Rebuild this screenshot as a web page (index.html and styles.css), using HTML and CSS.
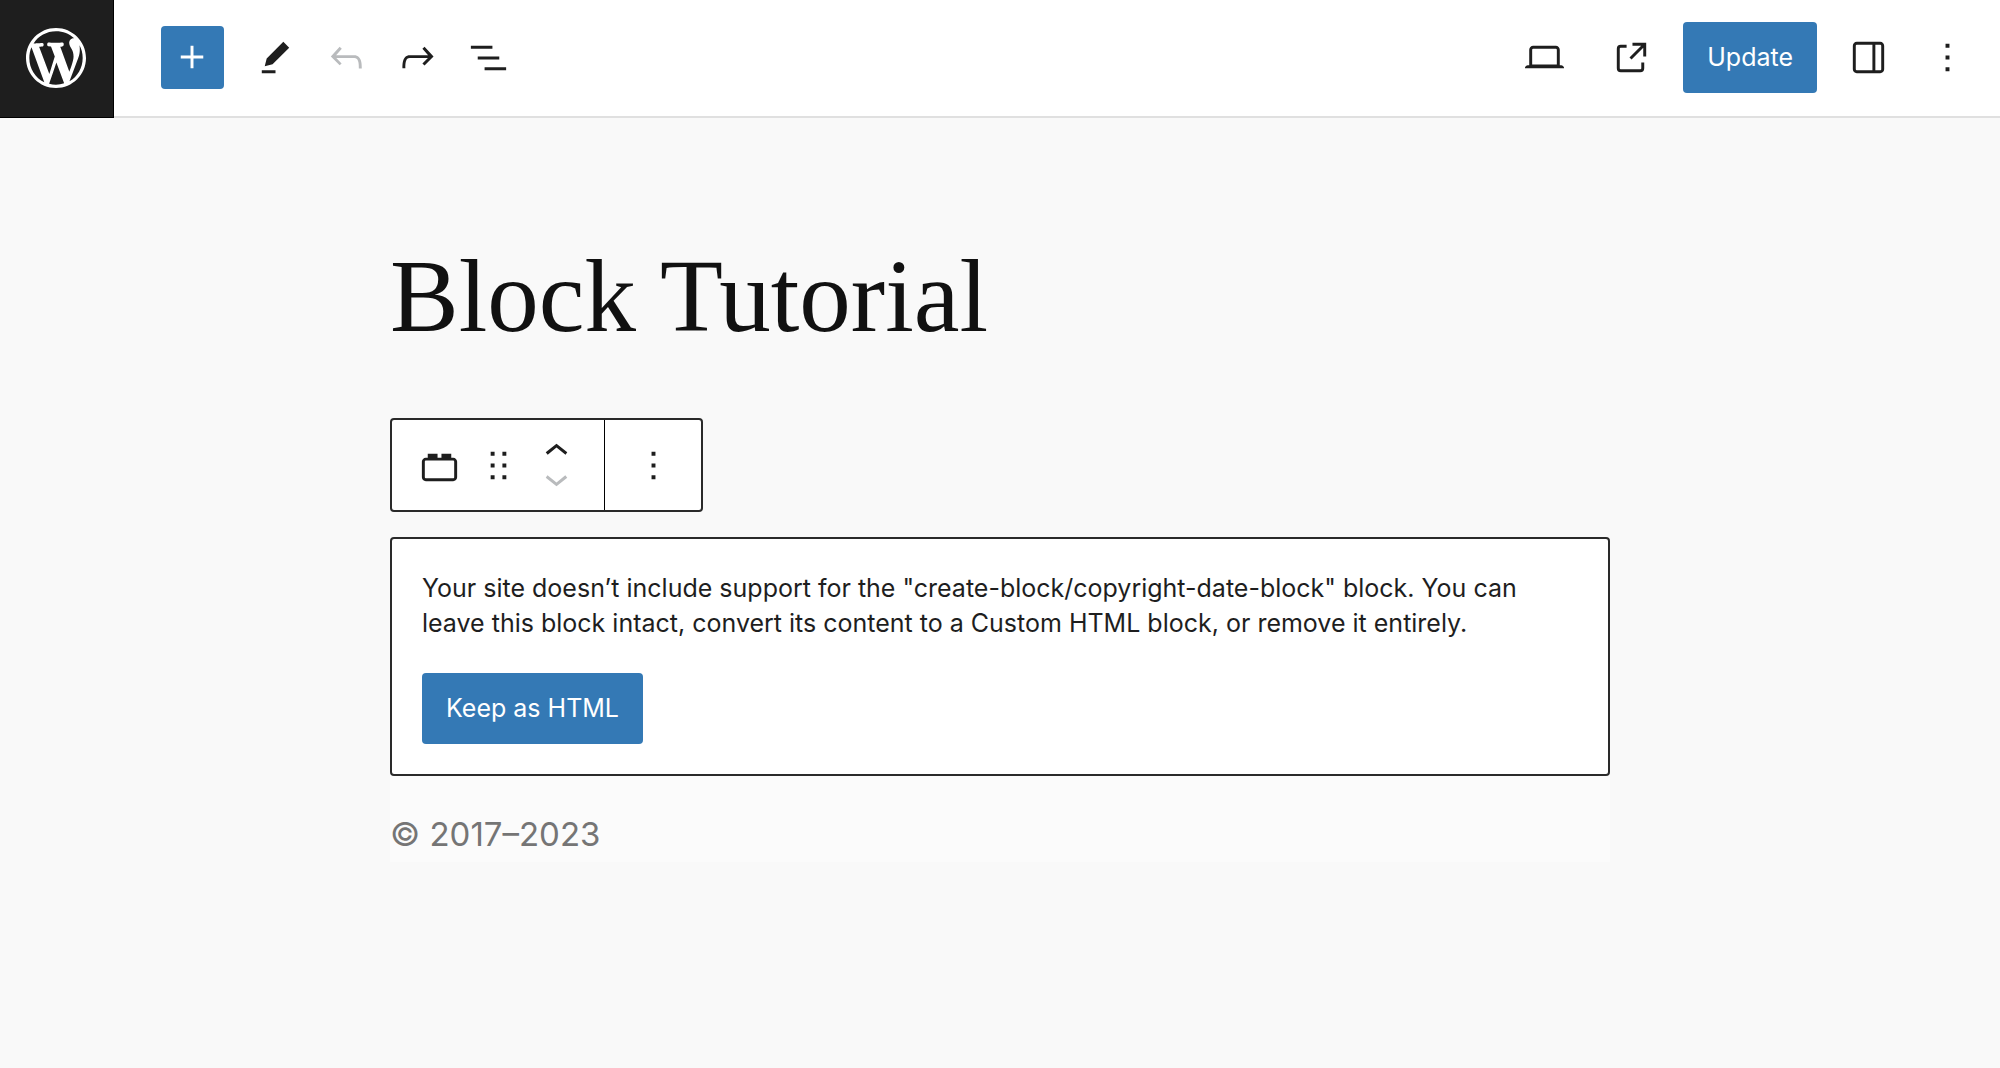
FILE: index.html
```html
<!DOCTYPE html>
<html lang="en">
<head>
<meta charset="utf-8">
<meta name="viewport" content="width=device-width, initial-scale=1">
<title>Block Tutorial</title>
<link rel="stylesheet" href="styles.css">
</head>
<body>
<header class="header">
  <a class="site-link" href="#" aria-label="View posts">
    <svg class="logo" viewBox="-2 -2 24 24" aria-hidden="true"><path d="M20 10c0-5.51-4.49-10-10-10C4.48 0 0 4.49 0 10c0 5.52 4.48 10 10 10 5.51 0 10-4.48 10-10zM7.78 15.37L4.37 6.22c.55-.02 1.17-.08 1.17-.08.5-.06.44-1.13-.06-1.11 0 0-1.45.11-2.37.11-.18 0-.37 0-.58-.01C4.12 2.69 6.87 1.11 10 1.11c2.33 0 4.45.87 6.05 2.34-.68-.11-1.65.39-1.65 1.58 0 .74.45 1.36.9 2.1.35.61.55 1.36.55 2.46 0 1.49-1.4 5-1.4 5l-3.03-8.37c.54-.02.82-.17.82-.17.5-.05.44-1.25-.06-1.22 0 0-1.44.12-2.38.12-.87 0-2.33-.12-2.33-.12-.5-.03-.56 1.2-.06 1.22l.92.08 1.26 3.41zM17.41 10c.24-.64.74-1.87.43-4.25.7 1.29 1.05 2.71 1.05 4.25 0 3.29-1.73 6.24-4.4 7.78.97-2.59 1.94-5.2 2.92-7.78zM6.1 18.09C3.12 16.65 1.11 13.53 1.11 10c0-1.3.23-2.48.72-3.59C3.25 10.3 4.67 14.2 6.1 18.09zm4.03-6.63l2.58 6.98c-.86.29-1.76.45-2.71.45-.79 0-1.57-.11-2.29-.33.81-2.38 1.62-4.74 2.42-7.1z"/></svg>
  </a>
  <div class="document-tools" role="toolbar" aria-label="Document tools">
    <button class="inserter" type="button" aria-label="Add block">
      <svg class="icon" viewBox="0 0 24 24" aria-hidden="true"><path d="M11 12.5V17.5H12.5V12.5H17.5V11H12.5V6H11V11H6V12.5H11Z"/></svg>
    </button>
    <div class="tool-group">
      <button class="tool" type="button" aria-label="Tools">
        <svg class="icon" viewBox="0 0 24 24" aria-hidden="true"><path d="m19 7-3-3-8.5 8.5-1 4 4-1L19 7Zm-7 11.5H5V20h7v-1.5Z"/></svg>
      </button>
      <button class="tool" type="button" aria-label="Undo" disabled>
        <svg class="icon" viewBox="0 0 24 24" aria-hidden="true"><path d="M18.3 11.7c-.6-.6-1.4-.9-2.3-.9H6.7l2.9-3.3-1.1-1-4.5 5L8.5 16l1-1-2.7-2.7H16c.5 0 .9.2 1.3.5 1 1 1 3.4 1 4.5v.3h1.5v-.2c0-1.5 0-4.3-1.5-5.7z"/></svg>
      </button>
      <button class="tool" type="button" aria-label="Redo">
        <svg class="icon" viewBox="0 0 24 24" aria-hidden="true"><path d="M15.6 6.5l-1.1 1 2.9 3.3H8c-.9 0-1.7.3-2.3.9-1.4 1.5-1.4 4.2-1.4 5.6v.2h1.5v-.3c0-1.1 0-3.5 1-4.5.3-.3.7-.5 1.3-.5h9.2L14.5 15l1.1 1.1 4.6-4.6-4.6-5z"/></svg>
      </button>
      <button class="tool" type="button" aria-label="Document overview">
        <svg class="icon" viewBox="0 0 24 24" aria-hidden="true"><path d="M3 6h11v1.5H3V6Zm3.5 5.5h11V13h-11v-1.5ZM21 17H10v1.5h11V17Z"/></svg>
      </button>
    </div>
  </div>
  <div class="settings">
    <button class="action" type="button" aria-label="Preview">
      <svg class="icon" viewBox="0 0 24 24" aria-hidden="true"><path d="M20.5 16h-.7V8c0-1.1-.9-2-2-2H6.2c-1.1 0-2 .9-2 2v8h-.7c-.8 0-1.5.7-1.5 1.5h20c0-.8-.7-1.5-1.5-1.5zM5.7 8c0-.3.2-.5.5-.5h11.6c.3 0 .5.2.5.5v7.6H5.7V8z"/></svg>
    </button>
    <a class="action" href="#" aria-label="View page">
      <svg class="icon" viewBox="0 0 24 24" aria-hidden="true"><path d="M19.5 4.5h-7V6h4.44l-5.97 5.97 1.06 1.06L18 7.06v4.44h1.5v-7Zm-13 1a2 2 0 0 0-2 2v10a2 2 0 0 0 2 2h10a2 2 0 0 0 2-2v-3H17v3a.5.5 0 0 1-.5.5h-10a.5.5 0 0 1-.5-.5v-10a.5.5 0 0 1 .5-.5h3V5.5h-3Z"/></svg>
    </a>
    <button class="primary" type="button">Update</button>
    <div class="panel-tools">
      <button class="action" type="button" aria-label="Settings">
        <svg class="icon" viewBox="0 0 24 24" aria-hidden="true"><path d="M18 4H6c-1.1 0-2 .9-2 2v12c0 1.1.9 2 2 2h12c1.1 0 2-.9 2-2V6c0-1.1-.9-2-2-2zm-4 14.5H6c-.3 0-.5-.2-.5-.5V6c0-.3.2-.5.5-.5h8v13zm4.5-.5c0 .3-.2.5-.5.5h-2.5v-13H18c.3 0 .5.2.5.5v12z"/></svg>
      </button>
      <button class="action" type="button" aria-label="Options">
        <svg class="icon" viewBox="0 0 24 24" aria-hidden="true"><path d="M13 19h-2v-2h2v2zm0-6h-2v-2h2v2zm0-6h-2V5h2v2z"/></svg>
      </button>
    </div>
  </div>
</header>
<main class="canvas">
  <h1 class="post-title">Block Tutorial</h1>
  <div class="block-toolbar" role="toolbar" aria-label="Block tools">
    <div class="block-controls">
      <button class="block-type" type="button" aria-label="Unsupported">
        <svg class="icon" viewBox="0 0 24 24" aria-hidden="true"><path d="M19 8h-1V6h-5v2h-2V6H6v2H5c-1.1 0-2 .9-2 2v8c0 1.1.9 2 2 2h14c1.1 0 2-.9 2-2v-8c0-1.1-.9-2-2-2zm.5 10c0 .3-.2.5-.5.5H5c-.3 0-.5-.2-.5-.5v-8c0-.3.2-.5.5-.5h14c.3 0 .5.2.5.5v8z"/></svg>
      </button>
      <button class="drag" type="button" aria-label="Drag">
        <svg class="icon" viewBox="0 0 24 24" aria-hidden="true"><path d="M8 7h2V5H8v2zm0 6h2v-2H8v2zm0 6h2v-2H8v2zm6-14v2h2V5h-2zm0 8h2v-2h-2v2zm0 6h2v-2h-2v2z"/></svg>
      </button>
      <div class="movers">
        <button class="mover" type="button" aria-label="Move up">
          <svg class="icon" viewBox="0 0 24 24" aria-hidden="true"><path d="M6.5 12.4L12 8l5.5 4.4-.9 1.2L12 10l-4.5 3.6-1-1.2z"/></svg>
        </button>
        <button class="mover" type="button" aria-label="Move down" disabled>
          <svg class="icon" viewBox="0 0 24 24" aria-hidden="true"><path d="M17.5 11.6L12 16l-5.5-4.4.9-1.2L12 14l4.5-3.6 1 1.2z"/></svg>
        </button>
      </div>
    </div>
    <button class="block-options" type="button" aria-label="Block options">
      <svg class="icon" viewBox="0 0 24 24" aria-hidden="true"><path d="M13 19h-2v-2h2v2zm0-6h-2v-2h2v2zm0-6h-2V5h2v2z"/></svg>
    </button>
  </div>
  <section class="block" aria-label="Block: Unsupported">
    <div class="warning">
      <p class="warning-message">Your site doesn’t include support for the "create-block/copyright-date-block" block. You can leave this block intact, convert its content to a Custom HTML block, or remove it entirely.</p>
      <button class="primary" type="button">Keep as HTML</button>
    </div>
    <p class="saved-content">© 2017–2023</p>
  </section>
</main>
</body>
</html>
```
FILE: styles.css
```css
*,
*::before,
*::after {
  box-sizing: border-box;
}

body {
  margin: 0;
  min-height: 100vh;
  background: #f9f9f9;
  color: #1e1e1e;
  font-family: Inter, "Liberation Sans", sans-serif;
  font-size: 25px;
  line-height: 35px;
}

button {
  margin: 0;
  padding: 0;
  border: 0;
  background: none;
  color: inherit;
  font: inherit;
  cursor: pointer;
}

button:disabled {
  color: #b9bbbd;
  cursor: default;
}

.icon {
  display: block;
  flex: none;
  width: 47px;
  height: 47px;
  fill: currentColor;
}

/* Top bar */
.header {
  display: flex;
  align-items: stretch;
  background: #fff;
  border-bottom: 2px solid #e0e0e0;
}

.site-link {
  display: flex;
  align-items: center;
  justify-content: center;
  width: 114px;
  height: 118px;
  margin-bottom: -2px;
  padding: 0 2px 2px 0;
  background: #1e1e1e;
  border-right: 1px solid #000;
  border-bottom: 1px solid #000;
  color: #fff;
}

.logo {
  display: block;
  width: 72px;
  height: 72px;
  fill: currentColor;
}

.document-tools {
  display: flex;
  align-items: center;
  gap: 20px;
  padding: 0 0 2px 47px;
}

.tool-group {
  display: flex;
  gap: 8px;
}

.inserter,
.tool {
  display: flex;
  align-items: center;
  justify-content: center;
  width: 63px;
  height: 63px;
  border-radius: 4px;
}

.inserter {
  background: #3479b5;
  color: #fff;
}

.settings {
  display: flex;
  align-items: center;
  gap: 16px;
  margin-left: auto;
  padding: 0 17px 2px 0;
}

.panel-tools {
  display: flex;
  gap: 8px;
}

.action {
  display: flex;
  align-items: center;
  justify-content: center;
  width: 71px;
  height: 71px;
  color: inherit;
}

.primary {
  height: 71px;
  padding: 0 24px;
  border-radius: 4px;
  background: #3479b5;
  color: #fff;
}

/* Editing canvas */
.canvas {
  max-width: 1220px;
  margin: 0 auto;
  padding: 118px 0 64px;
}

.post-title {
  margin: 0 0 62px;
  color: #111;
  font-family: "Liberation Serif", serif;
  font-size: 103px;
  font-weight: 400;
  line-height: 120px;
}

.block-toolbar {
  display: flex;
  width: fit-content;
  height: 94px;
  margin-bottom: 25px;
  border: 2px solid #2a2a2a;
  border-radius: 4px;
  background: #fff;
}

.block-controls {
  display: flex;
  align-items: center;
  padding: 0 12px;
}

.block-type,
.drag,
.mover,
.block-options {
  display: flex;
  align-items: center;
  justify-content: center;
}

.block-type {
  width: 71px;
  height: 71px;
}

.drag {
  width: 46px;
  height: 71px;
}

.movers {
  display: flex;
  flex-direction: column;
}

.mover {
  width: 71px;
  height: 27px;
}

.block-options {
  width: 97px;
  border-left: 1px solid #000;
}

.block {
  background: #fbfbfb;
}

.warning {
  padding: 32px 30px 30px;
  border: 2px solid #2a2a2a;
  border-radius: 4px;
  background: #fff;
}

.warning-message {
  max-width: 1120px;
  margin: 0 0 32px;
}

.saved-content {
  margin: 0;
  padding: 34px 0 4px;
  color: #757575;
  font-size: 33px;
  line-height: 48px;
}
```
